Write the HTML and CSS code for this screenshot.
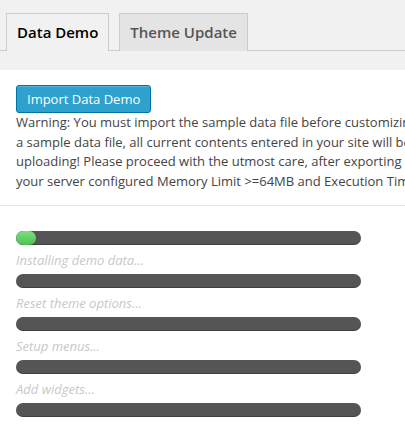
FILE: index.html
```html
<!DOCTYPE html>
<html>
<head>
<meta charset="utf-8">
<link rel="stylesheet" href="styles.css">
</head>
<body>
<div class="page">
  <div class="head">
    <div class="tabs">
      <span class="tab active">Data Demo</span>
      <span class="tab">Theme Update</span>
    </div>
  </div>
  <div class="content">
    <button class="btn">Import Data Demo</button>
    <p class="warning">Warning: You must import the sample data file before customizing your theme. If you import<br>a sample data file, all current contents entered in your site will be lost. Please backup before<br>uploading! Please proceed with the utmost care, after exporting all current data. Make sure<br>your server configured Memory Limit &gt;=64MB and Execution Time &gt;=60s.</p>
  </div>
  <hr class="sep">
  <div class="progress">
    <div class="bar"><div class="fill" style="width:20px"></div></div>
    <div class="label">Installing demo data...</div>
    <div class="bar"></div>
    <div class="label">Reset theme options...</div>
    <div class="bar"></div>
    <div class="label">Setup menus...</div>
    <div class="bar"></div>
    <div class="label">Add widgets...</div>
    <div class="bar"></div>
  </div>
</div>
</body>
</html>
```
FILE: styles.css
```css
html, body {
  margin: 0;
  padding: 0;
  background: #fff;
  overflow: hidden;
}
body {
  font-family: "Open Sans", "Noto Sans", sans-serif;
  color: #444;
}
.page {
  width: 405px;
  overflow: hidden;
}
.head {
  background: #f1f1f1;
  padding-top: 13px;
  padding-bottom: 19px;
}
.tabs {
  display: flex;
  gap: 10px;
  padding-left: 6px;
  border-bottom: 1px solid #ccc;
}
.tab {
  display: block;
  font-size: 15px;
  font-weight: 600;
  line-height: 24px;
  padding: 6px 10px;
  border: 1px solid #ccc;
  border-bottom: none;
  background: #e4e4e4;
  color: #555;
  margin-bottom: -1px;
  padding-bottom: 7px;
}
.tab.active {
  background: #f1f1f1;
  color: #000;
}
.content {
  padding: 15px 0 0 16px;
}
.btn {
  display: block;
  font-family: "Open Sans", "Noto Sans", sans-serif;
  font-size: 13px;
  line-height: 26px;
  height: 28px;
  padding: 0 10px;
  color: #fff;
  background: #2ea2cc;
  border: 1px solid #0074a2;
  border-radius: 3px;
  box-shadow: inset 0 1px 0 rgba(120,200,230,.5);
}
.warning {
  margin: 0;
  font-size: 13px;
  line-height: 19.5px;
  white-space: nowrap;
  color: #444;
}
.sep {
  border: 0;
  border-top: 1px solid #e5e5e5;
  margin: 14px 0 0;
  height: 0;
}
.progress {
  padding: 25px 0 0 16px;
}
.bar {
  width: 345px;
  height: 14px;
  border-radius: 7px;
  background: #555;
  box-shadow: inset 0 -1px 0 rgba(0,0,0,.25);
  overflow: hidden;
}
.fill {
  height: 100%;
  border-radius: 7px;
  background: linear-gradient(#7be07f, #4cc153);
}
.label {
  font-size: 13px;
  font-style: italic;
  line-height: 20px;
  color: #c8c8c8;
  margin: 5px 0 4px;
}
```
